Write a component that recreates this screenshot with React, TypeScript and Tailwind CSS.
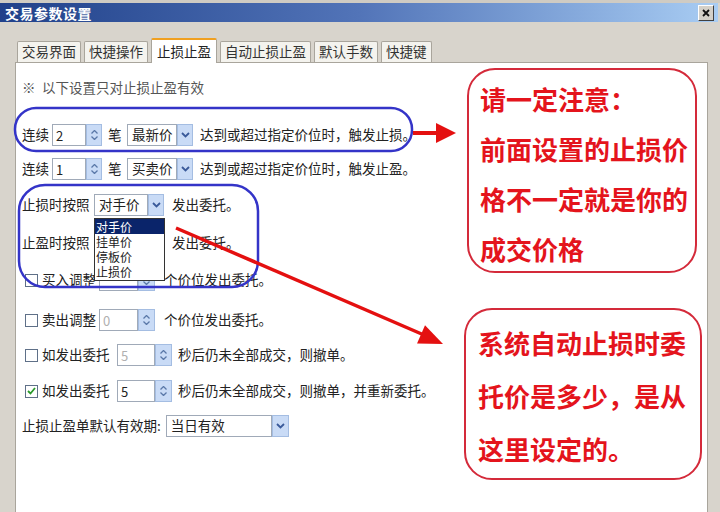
import React from "react";

function Spin({ w = "w-[16px]" }: { w?: string }) {
  return (
    <div className={`h-[22px] ${w} bg-[#c9dbf6] border border-[#a4bde2] flex flex-col items-center justify-center gap-[2px]`}>
      <svg width="7" height="4" viewBox="0 0 7 4">
        <path d="M0.5 3.5L3.5 0.5L6.5 3.5" fill="none" stroke="#5a78a8" strokeWidth="1.3" />
      </svg>
      <svg width="7" height="4" viewBox="0 0 7 4">
        <path d="M0.5 0.5L3.5 3.5L6.5 0.5" fill="none" stroke="#5a78a8" strokeWidth="1.3" />
      </svg>
    </div>
  );
}

function NumBox({ value, box, spin, dim, className = "" }: { value: string; box: string; spin?: string; dim?: boolean; className?: string }) {
  return (
    <div className={`flex h-[22px] ${className}`}>
      <div className={`${box} border border-[#a0aab8] bg-white flex items-center pl-[3px] text-[13px] ${dim ? "text-[#b0b0b0]" : "text-[#222]"}`}>
        {value}
      </div>
      <Spin w={spin} />
    </div>
  );
}

function Select({ text, w, btn = "w-[16px]", className = "", children }: { text: string; w: string; btn?: string; className?: string; children?: React.ReactNode }) {
  return (
    <div className={`relative flex h-[22px] ${className}`}>
      <div className={`${w} border border-[#a0aab8] bg-white flex items-center pl-[4px]`}>{text}</div>
      <div className={`${btn} bg-[#c9dbf6] border border-[#a4bde2] flex items-center justify-center`}>
        <svg width="9" height="6" viewBox="0 0 9 6">
          <path d="M1 1L4.5 4.5L8 1" fill="none" stroke="#3a5a9a" strokeWidth="1.8" />
        </svg>
      </div>
      {children}
    </div>
  );
}

function Check({ on }: { on?: boolean }) {
  return (
    <div className="w-[13px] h-[13px] border border-[#5f7088] bg-white flex items-center justify-center ml-[3px]">
      {on && (
        <svg width="9" height="8" viewBox="0 0 9 8">
          <path d="M1 4L3.5 6.5L8 1" fill="none" stroke="#2a9a2a" strokeWidth="1.8" />
        </svg>
      )}
    </div>
  );
}

const tabs = ["交易界面", "快捷操作", "止损止盈", "自动止损止盈", "默认手数", "快捷键"];

export default function App() {
  return (
    <div className="relative w-[720px] h-[512px] overflow-hidden bg-[#d8d4cc] flex flex-col font-['Noto_Sans_CJK_SC',sans-serif] text-[13.5px] text-[#222] leading-none">
      <div className="h-[3px] bg-[#cfcbc3]" />
      <div className="h-[19px] mr-[2px] flex items-center justify-between pl-[5px] pr-[4px] bg-linear-to-r from-[#21418a] via-[#5274b8] to-[#a9cdf3]">
        <span className="text-white font-bold text-[14px] tracking-[0.5px]">交易参数设置</span>
        <div className="w-[16px] h-[16px] bg-[#d4d0c8] border border-t-white border-l-white border-r-[#404040] border-b-[#404040] flex items-center justify-center">
          <svg width="8" height="8" viewBox="0 0 8 8">
            <path d="M1 1L7 7M7 1L1 7" stroke="#111" strokeWidth="1.8" />
          </svg>
        </div>
      </div>

      <div className="h-[40px] flex items-end pl-[17px] gap-[3px]">
        {tabs.map((t) =>
          t === "止损止盈" ? (
            <div key={t} className="relative z-10 h-[25px] -mb-[1px] px-[5px] bg-white border border-[#a9a59c] border-t-[2px] border-t-[#f0a020] border-b-0 rounded-t-[2px] flex items-center">
              {t}
            </div>
          ) : (
            <div key={t} className="h-[21px] px-[4px] bg-[#f4f3ee] border border-[#a9a59c] border-b-0 rounded-t-[2px] flex items-center text-[#333]">
              {t}
            </div>
          )
        )}
      </div>

      <div className="flex-1 ml-[15px] mr-[12px] bg-white border border-[#a9a59c] border-b-0 flex">
        <div className="w-[448px] pl-[6px] flex flex-col">
          <div className="mt-[13px] h-[24px] flex items-center text-[#555]">
            <span className="w-[20px]">※</span>
            <span>以下设置只对止损止盈有效</span>
          </div>

          <div className="mt-[23px] h-[24px] flex items-center">
            <span>连续</span>
            <NumBox className="ml-[3px]" value="2" box="w-[34px]" />
            <span className="ml-[6px]">笔</span>
            <Select className="ml-[5.5px]" text="最新价" w="w-[50px]" />
            <span className="ml-[7px]">达到或超过指定价位时，触发止损。</span>
          </div>

          <div className="mt-[10px] h-[24px] flex items-center">
            <span>连续</span>
            <NumBox className="ml-[3px]" value="1" box="w-[34px]" />
            <span className="ml-[6px]">笔</span>
            <Select className="ml-[5.5px]" text="买卖价" w="w-[50px]" />
            <span className="ml-[7px]">达到或超过指定价位时，触发止盈。</span>
          </div>

          <div className="mt-[12px] h-[24px] flex items-center">
            <span>止损时按照</span>
            <Select className="ml-[4.5px]" text="对手价" w="w-[54px]">
              <div className="absolute z-10 left-0 top-[24px] w-[71px] h-[63px] bg-white border border-[#333] flex flex-col text-[12px] leading-[15px]">
                <div className="bg-[#0a246a] text-white pl-[1px] h-[15px]">对手价</div>
                <div className="pl-[1px] h-[15px]">挂单价</div>
                <div className="pl-[1px] h-[15px]">停板价</div>
                <div className="pl-[1px] h-[15px]">止损价</div>
              </div>
            </Select>
            <span className="ml-[8px]">发出委托。</span>
          </div>

          <div className="mt-[14px] h-[24px] flex items-center">
            <span>止盈时按照</span>
            <Select className="ml-[4.5px]" text="" w="w-[54px]" />
            <span className="ml-[8px]">发出委托。</span>
          </div>

          <div className="mt-[13px] h-[24px] flex items-center">
            <Check />
            <span className="ml-[4px]">买入调整</span>
            <NumBox className="ml-[3px]" value="" box="w-[39px]" spin="w-[17px]" dim />
            <span className="ml-[9px]">个价位发出委托。</span>
          </div>

          <div className="mt-[16px] h-[24px] flex items-center">
            <Check />
            <span className="ml-[4px]">卖出调整</span>
            <NumBox className="ml-[3px]" value="0" box="w-[39px]" spin="w-[17px]" dim />
            <span className="ml-[9px]">个价位发出委托。</span>
          </div>

          <div className="mt-[11px] h-[24px] flex items-center">
            <Check />
            <span className="ml-[4px]">如发出委托</span>
            <NumBox className="ml-[7.5px]" value="5" box="w-[38px]" spin="w-[17px]" dim />
            <span className="ml-[6px]">秒后仍未全部成交，则撤单。</span>
          </div>

          <div className="mt-[12px] h-[24px] flex items-center">
            <Check on />
            <span className="ml-[4px]">如发出委托</span>
            <NumBox className="ml-[7.5px]" value="5" box="w-[38px]" spin="w-[17px]" />
            <span className="ml-[6px]">秒后仍未全部成交，则撤单，并重新委托。</span>
          </div>

          <div className="mt-[11px] h-[24px] flex items-center">
            <span>止损止盈单默认有效期:</span>
            <Select className="ml-[5px]" text="当日有效" w="w-[106px]" btn="w-[17px]" />
          </div>
        </div>

        <div className="flex-1 flex flex-col pt-[5px] text-[#e4141c] font-bold text-[26px]">
          <div className="ml-[3px] w-[230px] h-[205px] border-2 border-[#d42a3a] rounded-[28px] pt-[4px] pl-[11px] leading-[50px]">
            <div>请一定注意：</div>
            <div>前面设置的止损价</div>
            <div>格不一定就是你的</div>
            <div>成交价格</div>
          </div>
          <div className="mt-[35px] w-[238px] h-[172px] border-2 border-[#d42a3a] rounded-[28px] pt-[6px] pl-[12px] leading-[53px]">
            <div>系统自动止损时委</div>
            <div>托价是多少，是从</div>
            <div>这里设定的。</div>
          </div>
        </div>
      </div>

      <svg className="absolute left-0 top-0 z-20 pointer-events-none" width="720" height="512" viewBox="0 0 720 512">
        <rect x="15" y="108" width="397" height="43" rx="21" fill="none" stroke="#3434c8" strokeWidth="2.5" />
        <rect x="19" y="185" width="239" height="102" rx="26" fill="none" stroke="#3434c8" strokeWidth="2.5" />
        <line x1="413" y1="133" x2="440" y2="133" stroke="#e41010" strokeWidth="4" />
        <polygon points="436,123 456,133 436,143" fill="#e41010" />
        <line x1="176" y1="228" x2="424" y2="335" stroke="#e41010" strokeWidth="3.5" />
        <polygon points="443,344 417,343.6 425,325.2" fill="#e41010" />
      </svg>
    </div>
  );
}
